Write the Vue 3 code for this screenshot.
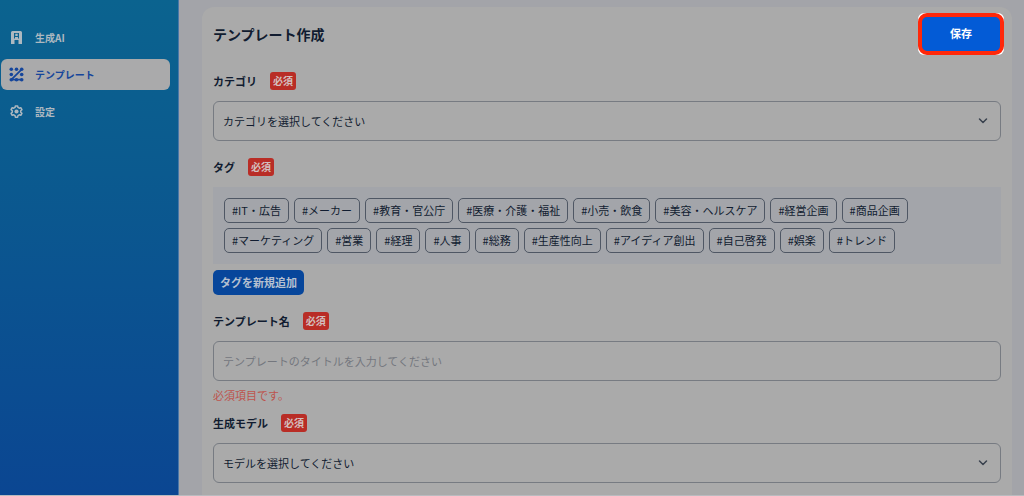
<script setup>
import { ref } from 'vue'

const category = ref('')
const title = ref('')
const model = ref('')

const menu = [
  { id: 'ai', label: '生成AI', active: false },
  { id: 'template', label: 'テンプレート', active: true },
  { id: 'settings', label: '設定', active: false },
]

const tags = [
  '#IT・広告', '#メーカー', '#教育・官公庁', '#医療・介護・福祉', '#小売・飲食',
  '#美容・ヘルスケア', '#経営企画', '#商品企画', '#マーケティング', '#営業',
  '#経理', '#人事', '#総務', '#生産性向上', '#アイディア創出', '#自己啓発',
  '#娯楽', '#トレンド',
]
</script>

<template>
  <div class="app">
    <nav class="sidebar">
      <a v-for="item in menu" :key="item.id" href="#" class="item" :class="{ active: item.active }">
        <svg v-if="item.id === 'ai'" class="icon" viewBox="0 0 15 15" aria-hidden="true">
          <path fill="currentColor" fill-rule="evenodd" d="M3.500 1H11.500a1.500 1.500 0 0 1 1.500 1.500V14H9.500V10H5.500V14H2V2.500A1.500 1.500 0 0 1 3.500 1zM5 3V8.500H6V7H9V8.500H10V3zM6.300 3.700H8.700V6H6.300z" />
        </svg>
        <svg v-else-if="item.id === 'template'" class="icon" viewBox="0 0 15 15" aria-hidden="true">
          <g fill="currentColor">
            <circle cx="2.300" cy="2.300" r="1.800" />
            <circle cx="7.500" cy="2.300" r="1.800" />
            <circle cx="12.700" cy="2.300" r="1.800" />
            <circle cx="2.300" cy="7.500" r="1.800" />
            <circle cx="12.700" cy="7.500" r="1.800" />
            <circle cx="2.300" cy="12.700" r="1.800" />
            <circle cx="7.500" cy="12.700" r="1.800" />
            <circle cx="12.700" cy="12.700" r="1.800" />
          </g>
          <path d="M2.300 12.700 12.700 2.300M2.300 12.700H12.700" stroke="currentColor" stroke-width="1.700" fill="none" />
        </svg>
        <svg v-else class="icon" viewBox="0 0 16 16" aria-hidden="true">
          <path d="M6.800 2h2.400l.4 1.700 1.300.75 1.700-.5 1.200 2.050-1.300 1.250v1.500l1.300 1.250-1.200 2.050-1.700-.5-1.300.75L9.200 14H6.800l-.4-1.700-1.300-.75-1.700.5L2.200 10l1.300-1.250v-1.500L2.200 6l1.200-2.050 1.700.5 1.300-.75z" fill="none" stroke="currentColor" stroke-width="1.600" stroke-linejoin="round" />
          <circle cx="8" cy="8" r="2.200" fill="currentColor" />
        </svg>
        <span>{{ item.label }}</span>
      </a>
    </nav>

    <main class="main">
      <form class="card" @submit.prevent>
        <header class="head">
          <h1>テンプレート作成</h1>
          <div class="focus">
            <button type="submit" class="save">保存</button>
          </div>
        </header>

        <div class="label-row">
          <label for="category">カテゴリ</label>
          <span class="badge">必須</span>
        </div>
        <div class="select-wrap">
          <select id="category" v-model="category" class="field">
            <option value="">カテゴリを選択してください</option>
          </select>
          <svg class="chevron" viewBox="0 0 10 10" aria-hidden="true"><path d="m1.500 3 3.500 3.500L8.500 3" /></svg>
        </div>

        <div class="label-row">
          <span id="tags-label" class="label">タグ</span>
          <span class="badge">必須</span>
        </div>
        <div class="tags" role="group" aria-labelledby="tags-label">
          <button v-for="tag in tags" :key="tag" type="button" class="tag">{{ tag }}</button>
        </div>
        <button type="button" class="add">タグを新規追加</button>

        <div class="label-row">
          <label for="title">テンプレート名</label>
          <span class="badge">必須</span>
        </div>
        <input id="title" v-model="title" type="text" class="field" placeholder="テンプレートのタイトルを入力してください" aria-describedby="title-error">
        <p id="title-error" class="error">必須項目です。</p>

        <div class="label-row after-error">
          <label for="model">生成モデル</label>
          <span class="badge">必須</span>
        </div>
        <div class="select-wrap">
          <select id="model" v-model="model" class="field">
            <option value="">モデルを選択してください</option>
          </select>
          <svg class="chevron" viewBox="0 0 10 10" aria-hidden="true"><path d="m1.500 3 3.500 3.500L8.500 3" /></svg>
        </div>
      </form>
    </main>
  </div>
</template>

<style>
body {
  margin: 0;
  background: #a3a4a9;
}
</style>

<style scoped>
.app,
.app * {
  box-sizing: border-box;
}
.app {
  display: flex;
  min-height: 100vh;
  background: #a3a4a9;
  color: #111c30;
  font-family: "Noto Sans CJK JP", "Noto Sans", sans-serif;
  font-size: 11px;
  line-height: 17px;
  border-bottom: 1px solid #b9bbbf;
}
button,
input,
select {
  font: inherit;
  color: inherit;
  margin: 0;
}
.sidebar {
  flex: none;
  width: 179px;
  padding: 22px 8px 0 1px;
  display: flex;
  flex-direction: column;
  gap: 6px;
  background: linear-gradient(#0b638f, #0b5a8f 35%, #0b4692);
  border-right: 1px solid #4a77a8;
}
.item {
  display: flex;
  align-items: center;
  gap: 11px;
  height: 31px;
  padding: 0 8px;
  border-radius: 6px;
  color: #adb8c0;
  font-size: 10px;
  font-weight: 700;
  text-decoration: none;
}
.item.active {
  background: #aaaaab;
  color: #16469b;
}
.icon {
  flex: none;
  width: 15px;
  height: 15px;
}
.main {
  flex: 1;
  min-width: 0;
  padding: 7px 12px 0 23px;
  display: flex;
}
.card {
  flex: 1;
  min-width: 0;
  padding: 6px 11px 12px;
  background: #aaaaaa;
  border-radius: 12px 12px 0 0;
}
.head {
  display: flex;
  align-items: center;
  justify-content: space-between;
  margin-right: -3px;
}
h1 {
  margin: 0;
  font-size: 14px;
  line-height: 20px;
  font-weight: 700;
}
.focus {
  background: #ffffff;
  border-radius: 6px;
}
.save {
  display: block;
  width: 86px;
  height: 42px;
  padding: 0 0 2px;
  border: 4px solid #ff280a;
  border-radius: 9px;
  background: #035bd6;
  color: #ffffff;
  font-weight: 700;
}
.label-row {
  display: flex;
  align-items: center;
  gap: 13px;
  height: 18px;
  margin: 17px 0 11px;
  font-weight: 700;
}
.label-row.after-error {
  margin-top: 10px;
}
.badge {
  height: 18px;
  padding: 0 3px;
  border-radius: 3px;
  background: #b92d26;
  color: #d3bfbe;
  font-size: 10px;
  line-height: 18px;
  font-weight: 700;
}
.select-wrap {
  position: relative;
}
.field {
  display: block;
  width: 100%;
  height: 40px;
  padding: 0 9px;
  border: 1px solid #777b82;
  border-radius: 6px;
  background: transparent;
  appearance: none;
  outline: none;
}
.field::placeholder {
  color: #74777e;
  opacity: 1;
}
.chevron {
  position: absolute;
  right: 13px;
  top: 15px;
  width: 10px;
  height: 10px;
  pointer-events: none;
  fill: none;
  stroke: #39414e;
  stroke-width: 1.500;
  stroke-linecap: round;
  stroke-linejoin: round;
}
.tags {
  display: flex;
  flex-wrap: wrap;
  gap: 5px;
  padding: 11px;
  background: #a3a5aa;
}
.tag {
  height: 25px;
  padding: 0 7px;
  border: 1px solid #4f5764;
  border-radius: 5px;
  background: transparent;
}
.add {
  display: block;
  height: 25px;
  margin-top: 6px;
  padding: 0 7px;
  border: 0;
  border-radius: 5px;
  background: #07469b;
  color: #b6c0d0;
  font-weight: 700;
}
.error {
  margin: 6px 0 0;
  color: #bd544d;
}
</style>
